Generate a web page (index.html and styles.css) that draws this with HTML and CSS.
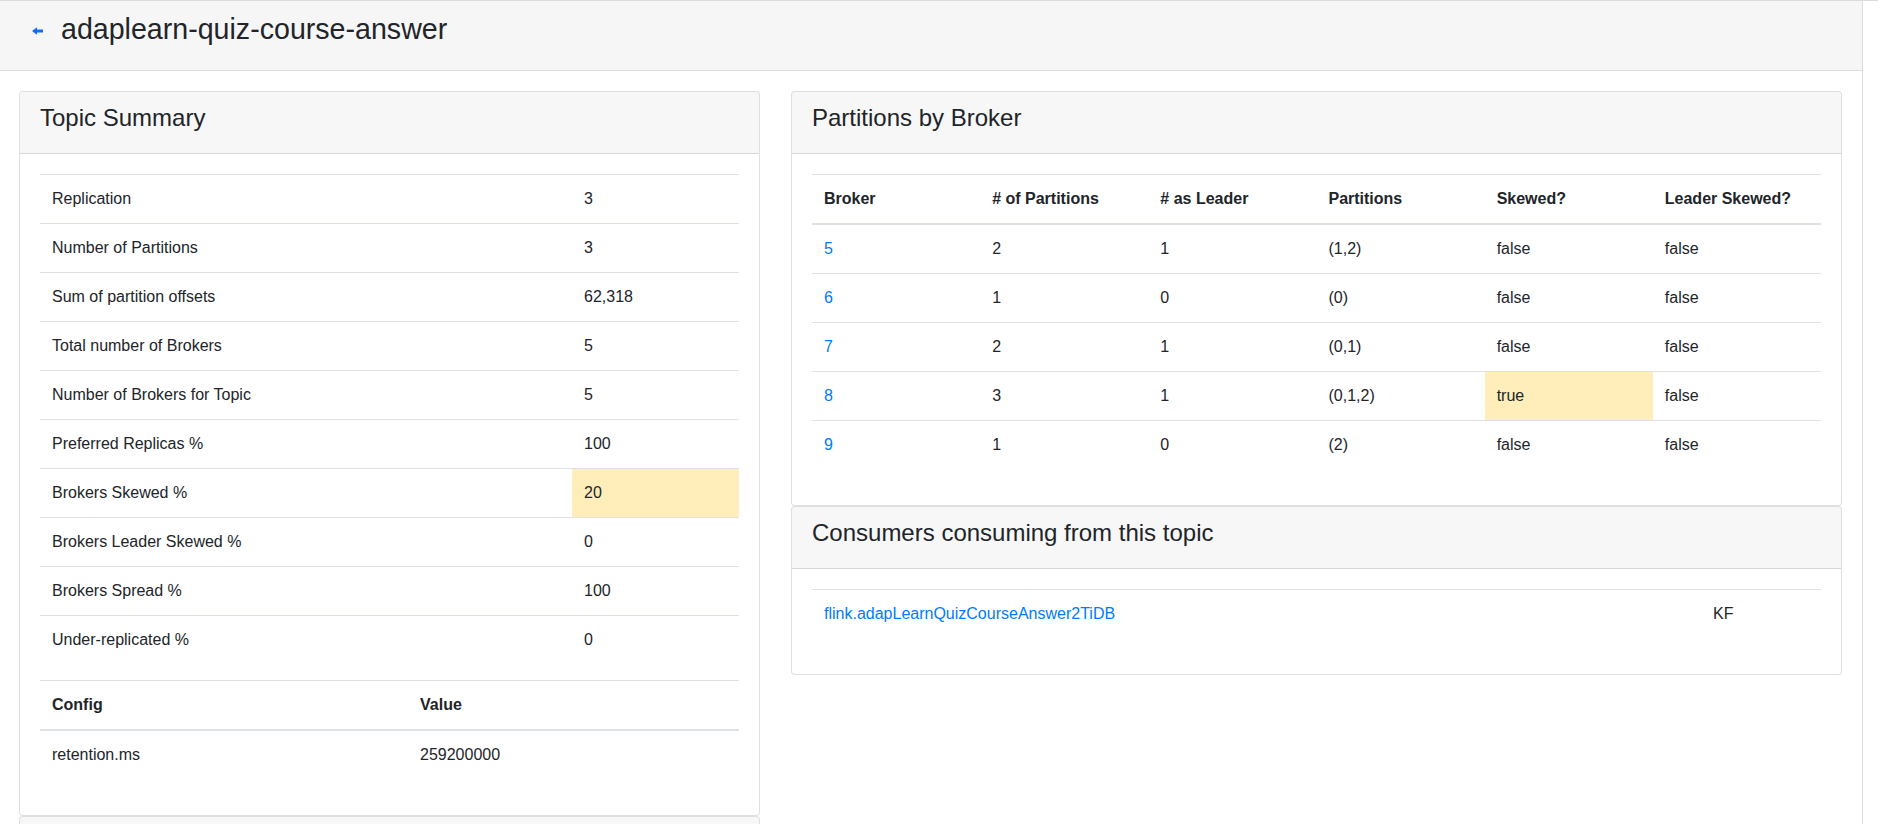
FILE: index.html
```html
<!DOCTYPE html>
<html lang="en">
<head>
<meta charset="utf-8">
<title>adaplearn-quiz-course-answer</title>
<link rel="stylesheet" href="styles.css">
</head>
<body>
<div class="page">
  <header class="page-header">
    <a class="back" href="#" aria-label="Back">
      <svg width="11" height="8" viewBox="0 0 11 8"><path d="M0 4 L5 0.2 L5 2.6 L11 2.6 L11 5.4 L5 5.4 L5 7.8 Z" fill="#0d6efd"/></svg>
    </a>
    <h3 class="title">adaplearn-quiz-course-answer</h3>
  </header>

  <main class="content">
    <section class="col">
      <div class="card">
        <div class="card-header"><h4>Topic Summary</h4></div>
        <div class="card-body">
          <table class="table summary">
            <tbody>
              <tr><td class="k">Replication</td><td>3</td></tr>
              <tr><td class="k">Number of Partitions</td><td>3</td></tr>
              <tr><td class="k">Sum of partition offsets</td><td>62,318</td></tr>
              <tr><td class="k">Total number of Brokers</td><td>5</td></tr>
              <tr><td class="k">Number of Brokers for Topic</td><td>5</td></tr>
              <tr><td class="k">Preferred Replicas %</td><td>100</td></tr>
              <tr><td class="k">Brokers Skewed %</td><td class="warn">20</td></tr>
              <tr><td class="k">Brokers Leader Skewed %</td><td>0</td></tr>
              <tr><td class="k">Brokers Spread %</td><td>100</td></tr>
              <tr><td class="k">Under-replicated %</td><td>0</td></tr>
            </tbody>
          </table>
          <table class="table config">
            <thead>
              <tr><th class="k">Config</th><th>Value</th></tr>
            </thead>
            <tbody>
              <tr><td class="k">retention.ms</td><td>259200000</td></tr>
            </tbody>
          </table>
        </div>
      </div>
      <div class="card">
        <div class="card-header card-header-empty"></div>
        <div class="card-body"></div>
      </div>
    </section>

    <section class="col">
      <div class="card">
        <div class="card-header"><h4>Partitions by Broker</h4></div>
        <div class="card-body">
          <table class="table brokers">
            <thead>
              <tr><th>Broker</th><th># of Partitions</th><th># as Leader</th><th>Partitions</th><th>Skewed?</th><th>Leader Skewed?</th></tr>
            </thead>
            <tbody>
              <tr><td><a href="#">5</a></td><td>2</td><td>1</td><td>(1,2)</td><td>false</td><td>false</td></tr>
              <tr><td><a href="#">6</a></td><td>1</td><td>0</td><td>(0)</td><td>false</td><td>false</td></tr>
              <tr><td><a href="#">7</a></td><td>2</td><td>1</td><td>(0,1)</td><td>false</td><td>false</td></tr>
              <tr><td><a href="#">8</a></td><td>3</td><td>1</td><td>(0,1,2)</td><td class="warn">true</td><td>false</td></tr>
              <tr><td><a href="#">9</a></td><td>1</td><td>0</td><td>(2)</td><td>false</td><td>false</td></tr>
            </tbody>
          </table>
        </div>
      </div>
      <div class="card">
        <div class="card-header"><h4>Consumers consuming from this topic</h4></div>
        <div class="card-body">
          <table class="table consumers">
            <tbody>
              <tr><td class="k"><a href="#">flink.adapLearnQuizCourseAnswer2TiDB</a></td><td>KF</td></tr>
            </tbody>
          </table>
        </div>
      </div>
    </section>
  </main>
</div>
</body>
</html>
```

FILE: styles.css
```css
html, body {
  margin: 0;
  padding: 0;
}

body {
  font-family: "Segoe UI", "Liberation Sans", Arial, sans-serif;
  font-size: 16px;
  line-height: 1.5;
  color: #212529;
  background: #ffffff;
  border-top: 1px solid #dcdcdc;
}

.page {
  width: 1862px;
  min-height: 823px;
  border-right: 1px solid #dcdcdc;
  box-sizing: content-box;
}

.page-header {
  height: 69px;
  background: #f6f6f6;
  border-bottom: 1px solid #dcdcdc;
  display: flex;
  align-items: flex-start;
  padding-left: 32px;
}

.back {
  display: block;
  width: 11px;
  height: 8px;
  margin-top: 26px;
  margin-right: 18px;
  line-height: 0;
}

.title {
  margin: 11px 0 0 0;
  font-size: 28.6px;
  line-height: 1.2;
  font-weight: 500;
  color: #212529;
}

.content {
  display: grid;
  grid-template-columns: 741px 1fr;
  column-gap: 31px;
  padding: 20px 20px 0 19px;
  align-items: start;
}

.col {
  display: flex;
  flex-direction: column;
}

.card {
  background: #fff;
  border: 1px solid rgba(0, 0, 0, 0.125);
  border-radius: 4px;
}

.card-header {
  padding: 12px 20px;
  background: rgba(0, 0, 0, 0.03);
  border-bottom: 1px solid rgba(0, 0, 0, 0.125);
  border-radius: 3px 3px 0 0;
}

.card-header-empty {
  height: 37px;
}

.card-header h4 {
  margin: 0 0 8px 0;
  font-size: 24px;
  line-height: 1.2;
  font-weight: 500;
}

.card-body {
  padding: 20px;
}

.table {
  width: 100%;
  border-collapse: collapse;
  margin-bottom: 16px;
  color: #212529;
}

.table td,
.table th {
  padding: 12px;
  vertical-align: top;
  border-top: 1px solid #dee2e6;
  text-align: left;
}

.table th {
  font-weight: 700;
}

.table thead th {
  vertical-align: bottom;
  border-bottom: 2px solid #dee2e6;
}

.table a {
  color: #007bff;
  text-decoration: none;
}

.warn {
  background: #ffeeba;
}

.summary .k {
  width: 508px;
}

.config .k {
  width: 344px;
}

.brokers {
  table-layout: fixed;
}

.consumers .k {
  width: 865px;
}
```
